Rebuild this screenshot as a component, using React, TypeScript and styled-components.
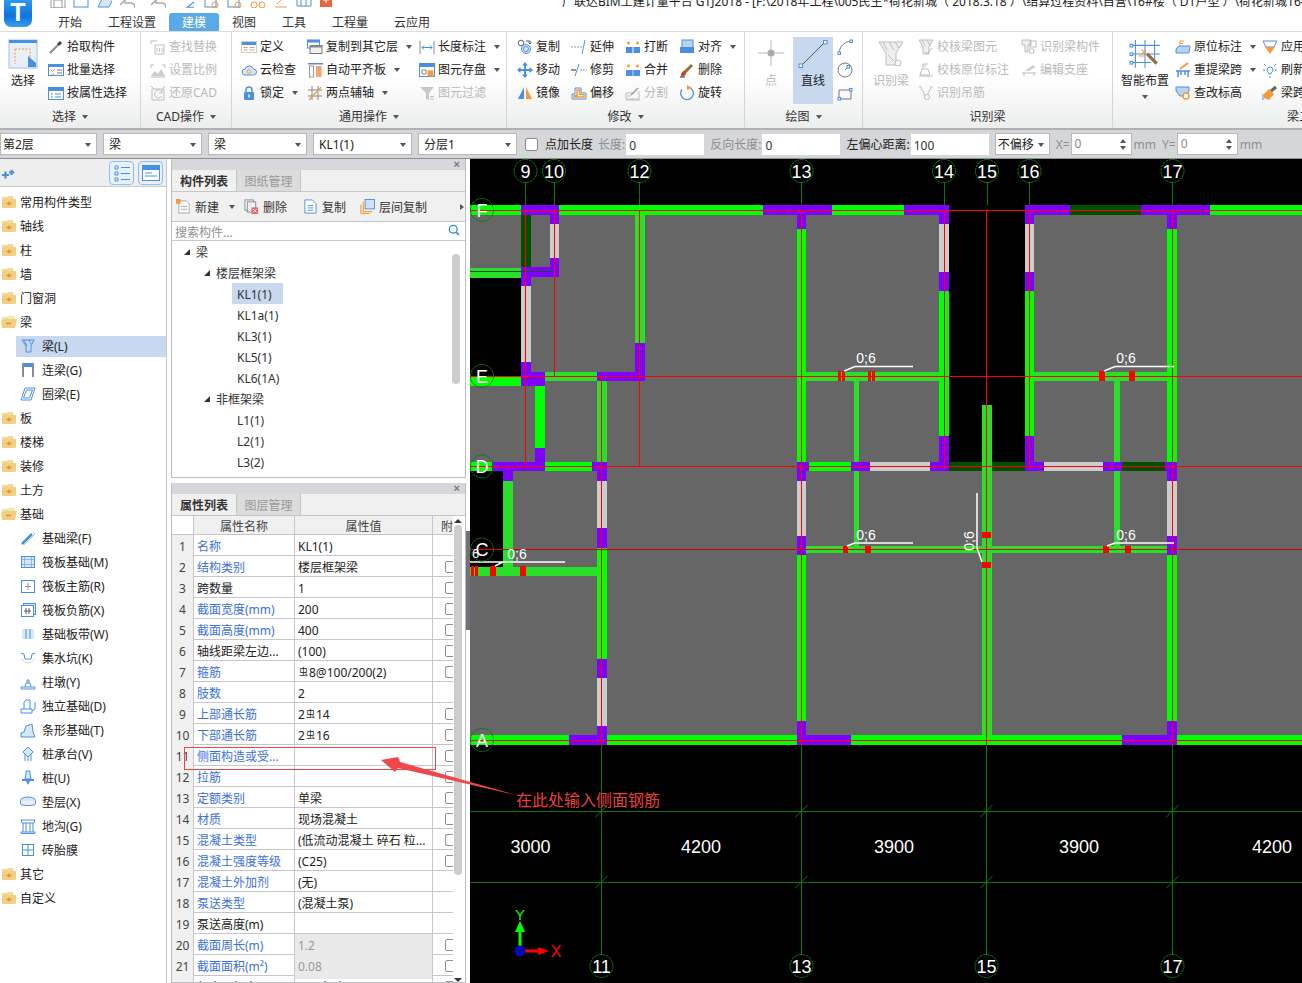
import React from 'react';
import styled, { createGlobalStyle } from 'styled-components';

const GlobalStyle = createGlobalStyle`
  html, body { margin: 0; padding: 0; background: #fff; overflow: hidden; }
  * { box-sizing: border-box; }
  #root { font: 12px/16px "Noto Sans", "Noto Sans CJK SC", sans-serif; color: #222; }
`;

const B = '#4a90e2', LB = '#d8e7f8', O = '#f59a3a', GR = '#bdbdbd';

const S = ({ c = B, f = 'none', w = 1, d, dash }: any) => <path d={d} stroke={c} fill={f} strokeWidth={w} strokeDasharray={dash} />;

const icons: Record<string, React.ReactNode> = {
  select: <><rect x="1" y="1" width="28" height="28" fill="#e8eff8" stroke="#9fc2ea" /><rect x="1" y="1" width="28" height="3" fill={B} /><path d="M7 10h15v15" fill="none" stroke={O} strokeDasharray="2 1.5" /><path d="M7 10v15" stroke={O} strokeDasharray="2 1.5" /><path d="M20 17l8 7v4h-8z" fill={B} /></>,
  picker: <><S c="#888" w={2} d="M2 14l8-8" /><S c="#444" w={3} d="M10 6l3-3" /></>,
  batch: <><rect x=".5" y="2.5" width="15" height="11" fill="#fff" stroke={B} /><rect x="1" y="3" width="14" height="2" fill={B} /><S c={O} d="M3 8l1.5 1.5L7 7M3 12l1.5 1 2-2" /><S c="#777" d="M9 8h5M9 11h5" /></>,
  propsel: <><rect x=".5" y="2.5" width="15" height="12" fill="#fff" stroke={B} /><rect x="1" y="3" width="14" height="3" fill={B} /><S c={B} d="M3 9h2M7 9h6M3 12h2M7 12h6" /></>,
  find: <><S c={GR} d="M1 2h6M1 2v3M5 6h9v9H5zM7 9v4M9.5 9v4M12 9v4" /></>,
  scale: <><S c={GR} d="M1 3h3M12 3h3M1 3v3M15 3v3" /><path d="M1 14l4-5 3 3 3-5 4 7z" fill="#ccc" /><S c={GR} d="M1 15h14" /></>,
  restore: <><S c={GR} d="M2 4h12v11H2zM1 1l3 3M15 1l-3 3M12 7a4 4 0 1 0 0 4M12 5v3H9" /></>,
  define: <><rect x=".5" y="2.5" width="15" height="11" fill="#fff" stroke="#ccc" /><rect x="1" y="3" width="14" height="3" fill={B} /><S c={O} d="M2.500 8.500h4M2.500 11h4" /><S c="#aaa" d="M8.500 8.500h5M8.500 11h5" /></>,
  cloud: <><path d="M4 13a3 3 0 0 1 0-6 4.500 4.500 0 0 1 8.500 0 3 3 0 0 1 0 6z" fill={LB} stroke={B} /><circle cx="8" cy="9.500" r="1.800" fill="none" stroke={O} /></>,
  lock: <><path d="M5 8V5a3 3 0 0 1 6 0v3" fill="none" stroke={B} strokeWidth="1.500" /><rect x="3" y="7" width="10" height="8" rx="1" fill={B} /><rect x="7.300" y="9.500" width="1.500" height="3" fill="#fff" /></>,
  copyfloor: <><rect x=".5" y="1" width="12" height="8" fill="#fff" stroke={B} /><rect x="1" y="1" width="11" height="2.500" fill={B} /><rect x="3" y="6.500" width="12" height="8" fill="#f0f0f0" stroke="#777" /><rect x="3" y="6.500" width="12" height="2" fill="#888" /></>,
  plate: <><rect x="1" y="1" width="15" height="1.500" fill={B} /><rect x="2.500" y="4" width="4" height="11" fill="#fff" stroke="#999" /><rect x="9" y="4" width="5.500" height="11" fill="#f9a36c" /></>,
  axis: <><S c="#888" d="M1 5h14M1 11h14M5 1v14M11 1v14" /><S c={O} w={1.200} d="M2 15L14 2" /></>,
  dim: <><S c="#889" d="M1 2v13M15 2v13" /><S c={B} d="M3 8.500h10M3 8.500l2-2M3 8.500l2 2M13 8.500l-2-2M13 8.500l-2 2" /></>,
  save: <><rect x=".5" y="1.500" width="15" height="13" fill="#fff" stroke={B} /><rect x="1" y="2" width="14" height="3" fill={B} /><S c="#888" d="M3 8h4v4H3z" /><rect x="8.500" y="8.500" width="6" height="6" fill={O} /></>,
  filter: <><path d="M1 2h14l-5 6v7l-3-1V8z" fill="#c8c8c8" /><S c={GR} d="M11 14h4M11 11.500h4" /></>,
  copy: <><circle cx="4" cy="4" r="2.800" fill="#fff" stroke="#666" /><circle cx="9" cy="10" r="4.500" fill={LB} stroke={B} /><circle cx="9" cy="10" r="2.500" fill="none" stroke={B} /><S c="#555" d="M9 2h4v3M11.500 3.500L13 5l1.500-1.500" /></>,
  move: <><path d="M8 0l3 3.500H9v3.500h3.500V5l3.500 3-3.500 3V9H9v3.500h2L8 16l-3-3.500h2V9H3.500v2L0 8l3.500-3v2H7V3.500H5z" fill={B} /></>,
  mirror: <><path d="M7 2v12H1z" fill={B} /><path d="M9 2v12h6z" fill={O} /></>,
  extend: <><S c="#7aa0d0" dash="2 1" d="M0 8h11" /><S c={B} d="M14 1l-3 14" /></>,
  trim: <><S c="#222" d="M0 8h5" /><S c="#7aa0d0" dash="2 1" d="M9 8h7" /><S c={B} d="M8 2l-4 12" /></>,
  offset: <><path d="M1 14V9h3V3h6v5h5v6z" fill="#fff" stroke={B} /><path d="M3 12V10.500h3V5h2.500v4.500H13V12z" fill="none" stroke={O} strokeWidth="1.500" /></>,
  breakI: <><rect x="1" y="8" width="6.500" height="6" fill={B} /><rect x="8.500" y="8" width="6.500" height="6" fill={B} /><S c={O} w={1.500} d="M2 4h3M3.500 2.500v3M11 4h3M12.500 2.500v3" /></>,
  merge: <><rect x="1" y="8" width="14" height="6" fill={B} /><S c="#bcd8f6" d="M8 8v6" /><S c={O} w={1.500} d="M2 4h3M3.500 2.500v3M11 4h3M12.500 2.500v3" /></>,
  split: <><S c={GR} d="M1 14h13V6M1 14V8h8" /><S c="#999" w={1.500} d="M6 10l7-7" /><S c={GR} d="M2 11h4M1 15h14" /></>,
  alignR: <><rect x="3" y="1" width="11" height="8" fill="#b8d4f4" stroke={B} /><rect x="1" y="8" width="14" height="6" fill={B} /></>,
  del: <><S c="#9a6a3a" w={3} d="M5 11l8-8" /><path d="M2 14c0-4 2-5 4-5l1 2c0 2-2 4-5 3z" fill="#c8401e" /><S c="#222" d="M1 15h5" /></>,
  rotate: <><path d="M8 2a6.300 6.300 0 1 1-5 2.500" fill="none" stroke={B} strokeWidth="1.300" /><path d="M8 0l5 3-5 2z" fill={O} /></>,
  point: <><S c="#bbb" d="M1 14h26M14 1v26" /><circle cx="14" cy="14" r="3.500" fill="#aaa" /></>,
  line: <><S c="#555" d="M3 27L27 3" /><rect x="1" y="25" width="3.500" height="3.500" fill="#fff" stroke={B} /><rect x="25.500" y="1.500" width="3.500" height="3.500" fill="#fff" stroke={B} /></>,
  arc: <><S c="#777" d="M2 14C3 6 8 3 14 2" /><rect x="1" y="13" width="2.500" height="2.500" fill="#fff" stroke={B} /><rect x="13" y="1" width="2.500" height="2.500" fill="#fff" stroke={B} /></>,
  circle: <><circle cx="8" cy="8" r="7" fill="none" stroke="#777" /><S c="#777" d="M8 8l3-3" /><rect x="10" y="3.500" width="2.500" height="2.500" fill="#fff" stroke={B} /></>,
  rectI: <><S c="#777" d="M2 5h12v9H2z" /><rect x="1" y="12.500" width="2.500" height="2.500" fill="#fff" stroke={B} /><rect x="12.500" y="3.500" width="2.500" height="2.500" fill="#fff" stroke={B} /></>,
  funnelBig: <><path d="M2 3h24l-7 11v12H9V14z" fill="#eee" stroke={GR} /><S c={GR} d="M6 3l4 8M12 3l5 8M18 3l4 6M11 16l6 6" /><circle cx="21" cy="24" r="3" fill="#fff" stroke={GR} /></>,
  chk1: <><path d="M1 1h14l-4 7v7H5V8z" fill="#eee" stroke={GR} /><S c={GR} d="M4 1l3 6M9 1l3 5M7 13l2 2 5-6" /></>,
  chk2: <><S c={GR} d="M2 13l2-6h6l2 6zM1 14h14M5 2v5M5 2h5M5 4h3" /></>,
  chk3: <><S c={GR} d="M1 2h3M12 2h3M3 3l3 5v3h4V8l3-5" /><circle cx="9" cy="12" r="2.500" fill="#fff" stroke={GR} /></>,
  chk4: <><path d="M1 1h9v5H7v7H4V6H1z" fill="#eee" stroke={GR} /><rect x="9" y="2" width="6" height="6" fill="none" stroke={GR} /><circle cx="10.500" cy="12" r="2.500" fill="#fff" stroke={GR} /></>,
  chk5: <><S c={GR} d="M1 11h14M3 14v-3M13 14v-3" /><path d="M4 9l8-6 2 2-6 4z" fill="#ccc" /></>,
  smart: <><S c={B} d="M6 1v26M15 1v26M24 1v22M1 6h28M1 14h28M1 22h20" /><S c="#9b6b3b" w={3} d="M17 14l9 9" /><S c={O} d="M12 10l4 4M16 10l-4 4M9 16h6" /><rect x="1" y="5" width="2.500" height="2.500" fill="#fff" stroke={B} /><rect x="1" y="13" width="2.500" height="2.500" fill="#fff" stroke={B} /><rect x="1" y="21" width="2.500" height="2.500" fill="#fff" stroke={B} /></>,
  raw: <><path d="M1 10l3-3h11l-1 7H1z" fill="#b8d4f4" stroke={B} /><S c={O} d="M5 2v5M5 2h4M5 4.500h3" /></>,
  span: <><S c={O} w={2} d="M5 7l8-6" /><S c={B} w={1.500} d="M1 9h14M3 9v6M13 9v6M6 9v4M10 9v4" /></>,
  elev: <><path d="M1 2h13v4l-3 5H5L1 6z" fill="#b8d4f4" stroke={B} /><circle cx="11" cy="11" r="3" fill="#fff" stroke={O} strokeWidth="1.500" /></>,
  apply: <><S c={B} d="M1 2h14l-3 6H4z" /><path d="M3 8h10l-5 7z" fill={O} /></>,
  refresh: <><S c={B} d="M5 8a3 3 0 1 1 6 0c0 2-2 2-2 4H7c0-2-2-2-2-4zM2 2l2 2M14 2l-2 2M1 8h2M13 8h2M7 15h2" /></>,
  brush: <><path d="M2 9l5-5 5 5-5 6-5-2z" fill={O} /><S c="#666" w={3} d="M9 6l5-4" /><S c={B} d="M1 15V9" /></>,
  sparkle: <><path d="M0 8h8M4 4v8" stroke={B} strokeWidth="2.500" /><path d="M8 5h6M11 2v6" stroke={B} strokeWidth="2.500" /></>,
  list: <><S c={B} d="M3 3h3v3H3zM3 9h3v3H3zM3 15h3v3H3zM9 4.500h9M9 10.500h9M9 16.500h9" /></>,
  form: <><rect x="1.500" y="2.500" width="17" height="15" fill="#fff" stroke={B} /><rect x="2" y="3" width="16" height="4" fill={B} /><S c={B} d="M4 10h7M4 13h12" /></>,
  folder: <><path d="M1 3h5l1-1h5v3H1z" fill="#f2d795" /><rect x="1" y="5" width="14" height="9" rx="1" fill="#f2cf80" /><S c="#d79a35" w={1.500} d="M5.500 9.500h5M8 7.500v4" /></>,
  folderOpen: <><path d="M1 3h5l1-1h7v3H1z" fill="#f6e3b2" /><path d="M3 5h13l-2 9H1L0 6z" fill="#f2cf80" /><S c="#c99a45" w={1.500} d="M5 9.500h5" /></>,
  beam: <><path d="M2 2h12l-3 6v6H6V8z" fill="none" stroke={B} /><S c={B} d="M4 2l3 6M9 2l2 4" /></>,
  link: <><rect x="2" y="1" width="12" height="4" fill={B} /><S c="#889" w={2} d="M3 1v14M13 1v14" /></>,
  ring: <><path d="M5 2h10l-4 12H1z" fill="#fff" stroke={B} /><path d="M6.500 4h6l-3 8h-6z" fill="none" stroke={B} /></>,
  fb: <><S c={B} w={2.500} d="M2 14L12 4" /><S c="#a9c9ee" w={1} d="M4 15l11-11L13 2" /></>,
  raft: <><rect x="1.500" y="2.500" width="13" height="11" fill={LB} stroke={B} /><path d="M1.500 5.500h13M1.500 10.500h13M4.500 2.500v11M11.500 2.500v11" stroke={B} fill="none" strokeDasharray="1 1" /></>,
  raft2: <><rect x="1.500" y="2.500" width="13" height="12" fill="#fff" stroke={B} /><S c="#999" d="M8 5v7M5 8.500h6" /></>,
  raft3: <><rect x="3.500" y="1.500" width="12" height="11" fill={LB} stroke={B} /><rect x="1.500" y="3.500" width="12" height="11" fill="#fff" stroke={B} /><S c="#556" d="M4 9h7M6 6v6M9 6v6" /></>,
  strip: <><rect x="2" y="3" width="12" height="10" fill={LB} /><S c={B} d="M6 3v10M10 3v10" /></>,
  pit: <><S c={B} d="M1 3l3 1 1 5h6l1-5 3-1" /><path d="M2 9c2 5 10 5 12 0" fill="none" stroke="#aaa" strokeDasharray="1 1" /></>,
  pier: <><S c={B} d="M1 13h14v2H1zM5 13l1-4h4l1 4M7 9V6h2v3" /></>,
  indep: <><path d="M1 11h11v4H1zM4 11V4l2-2h4v9M12 13l3-2V4" fill="#fff" stroke={B} /></>,
  strip2: <><path d="M1 15v-4l3-1 2-6 6-2 1 8 2 5z" fill={LB} stroke={B} /></>,
  cap: <><path d="M8 1l5 5-5 5-5-5z" fill={LB} stroke={B} /><S c={B} d="M5 8v7M8 11v4M11 8v7" /></>,
  pile: <><path d="M6 1h4v3l1 5H5l1-5z" fill={LB} stroke={B} /><path d="M2 9h12v2H2z" fill={B} /><path d="M6 11h4l-2 4z" fill={B} /></>,
  cushion: <><ellipse cx="8" cy="6.500" rx="7.500" ry="3.500" fill={LB} stroke={B} /><path d="M.5 7v3c0 2 15 2 15 0V7" fill="#eef" stroke={B} /></>,
  trench: <><S c={B} d="M1 2h14l-1 3H2zM3 5v9M6 5v9M10 5v9M13 5v9M1 14h14v1.500H1z" /></>,
  brick: <><rect x="2.500" y="2.500" width="11" height="11" fill="#fff" stroke={B} /><S c={B} d="M8 2.500v11M2.500 8h11" /></>,
  newI: <><path d="M3 2h8l3 3v10H3z" fill="#fff" stroke="#aaa" /><rect x="0" y="0" width="5" height="5" fill={O} /><S c="#aaa" d="M5 8h7M5 11h7" /></>,
  delI: <><rect x="1" y="1" width="9" height="11" fill="#fff" stroke="#889" /><rect x="3.500" y="3" width="9" height="11" fill="#eee" stroke="#889" /><rect x="8" y="9" width="7" height="7" fill="#e0606a" /><S c="#fff" d="M9.500 10.500l4 4M13.500 10.500l-4 4" /></>,
  copyI: <><path d="M2 1h8l4 4v10H2z" fill="#fff" stroke={B} /><S c={B} d="M5 7h6M5 9.500h6M5 12h6" /></>,
  floorI: <><rect x="5.500" y=".5" width="10" height="10" fill="#cfe2f7" stroke={B} /><S c={O} w={1.200} d="M3.500 3v10.500H13M1 6v9.500h9" /></>,
  search: <><circle cx="6" cy="6" r="4.500" fill="none" stroke="#2d8fc4" strokeWidth="1.500" /><path d="M9.500 9.500l3 3" stroke="#2d8fc4" strokeWidth="2" /></>,
  q1: <><S c="#999" d="M1 1h14v15H1zM4 8h8v8H4z" /></>,
  q2: <><rect x="1" y="1" width="14" height="14" fill="#fff" stroke={B} /><rect x="1" y="6" width="14" height="2" fill={B} /></>,
  q3: <><path d="M2 15l4-8h11l-4 8z" fill={LB} stroke={B} /></>,
  q4: <><S c="#aaa" w={1.500} d="M1 13l5-5v3h6c3 0 4 2 4 5" /></>,
  sigma: <><S c={B} w={1.500} d="M2 2h10M12 8L3 15h9" /></>,
  q5: <><rect x="1" y="1" width="11" height="14" fill="#fff" stroke={B} /><circle cx="11" cy="13" r="3" fill="none" stroke={O} /></>,
  q6: <><circle cx="4" cy="13" r="3" fill="none" stroke={O} /><circle cx="12" cy="13" r="3" fill="none" stroke={O} /></>,
  q7: <><S c={O} d="M2 15h12M4 12l6-6" /></>,
  q8: <><S c={B} d="M1 14h14v-6L8 2 1 8zM5 14V6M10 14V6" /></>,
  q9: <><rect x="1" y="2" width="12" height="13" fill="#e8663c" /><S c="#fff" d="M4 8h6M7 5v6" /><S c={B} d="M9 2h6v6" /></>,
};

const IconSvg = styled.svg<{ $s: number }>`
  width: ${(p) => p.$s}px;
  height: ${(p) => p.$s}px;
  flex: none;
  display: block;
`;
const Icon = ({ n, s = 16, v = 16 }: { n: string; s?: number; v?: number }) => (
  <IconSvg $s={s} viewBox={`0 0 ${v} ${v}`}>{icons[n]}</IconSvg>
);

const Page = styled.div`
  position: relative;
  width: 1302px;
  height: 983px;
  overflow: hidden;
  background: #fff;
`;
const TopBar = styled.header`
  display: flex;
  height: 32px;
  background: #fff;
  border-bottom: 1px solid #dcdcdc;
`;
const LogoCell = styled.div`
  width: 36px;
  padding-left: 4px;
  flex: none;
`;
const Logo = styled.div`
  width: 28px;
  height: 27px;
  border-radius: 0 0 7px 7px;
  background: linear-gradient(#2a9af0, #0f73de 60%, #3aa0ee);
  color: #fff;
  font: bold 25px/25px "Liberation Sans", sans-serif;
  text-align: center;
`;
const TopColumn = styled.div`
  flex: 1;
  min-width: 0;
  display: flex;
  flex-direction: column;
`;
const QuickRow = styled.div`
  height: 13px;
  display: flex;
  align-items: flex-end;
  overflow: hidden;
  padding-bottom: 5px;
`;
const QuickIcons = styled.div`
  width: 526px;
  flex: none;
  display: flex;
  align-items: flex-end;
  gap: 7px;
  padding-left: 14px;
`;
const QuickCaret = styled.span`
  width: 0;
  height: 0;
  flex: none;
  margin: 0 0 8px -5px;
  border: 3.5px solid transparent;
  border-top: 4px solid #888;
  border-bottom: 0;
`;
const SigmaCell = styled.span`
  flex: none;
  margin-left: 4px;
  width: 12px;
`;
const Title = styled.div`
  white-space: nowrap;
  line-height: 14px;
  color: #222;
  margin-bottom: -1px;
`;
const Tabs = styled.nav`
  height: 18px;
  display: flex;
  padding-left: 22px;
`;
const Tab = styled.div<{ $w: number; $on?: boolean; $ml?: number }>`
  width: ${(p) => p.$w}px;
  margin-left: ${(p) => p.$ml ?? 0}px;
  text-align: center;
  line-height: 19px;
  border-radius: 3px 3px 0 0;
  color: ${(p) => (p.$on ? '#fff' : '#333')};
  background: ${(p) => (p.$on ? '#5aa9e8' : 'transparent')};
`;

const Ribbon = styled.section`
  height: 98px;
  display: flex;
  background: linear-gradient(#fff 45%, #eceded);
  overflow: hidden;
  border-bottom: 2px solid #b0b1b4;
`;
const Group = styled.div<{ $w: number; $last?: boolean }>`
  width: ${(p) => p.$w}px;
  flex: none;
  display: flex;
  flex-direction: column;
  padding-top: 3px;
  border-right: ${(p) => (p.$last ? '0' : '1px solid #d4d5d6')};
`;
const GroupBody = styled.div<{ $pad?: number }>`
  height: 70px;
  display: flex;
  padding-left: ${(p) => p.$pad ?? 0}px;
`;
const GroupLabel = styled.div<{ $left?: number }>`
  height: 23px;
  display: flex;
  align-items: center;
  justify-content: ${(p) => (p.$left ? 'flex-start' : 'center')};
  padding-left: ${(p) => p.$left ?? 0}px;
  gap: 6px;
  color: #333;
  white-space: nowrap;
`;
const Caret = styled.span`
  width: 0;
  height: 0;
  flex: none;
  border: 3.5px solid transparent;
  border-top: 4px solid #555;
  border-bottom: 0;
`;
const ToolColumn = styled.div<{ $w: number; $ml?: number }>`
  width: ${(p) => p.$w}px;
  margin-left: ${(p) => p.$ml ?? 0}px;
  flex: none;
`;
const ToolItem = styled.div`
  height: 23px;
  display: flex;
  align-items: center;
  gap: 3px;
  white-space: nowrap;
`;
const ToolText = styled.span<{ $off?: boolean }>`
  color: ${(p) => (p.$off ? '#b9b9b9' : '#222')};
  margin-right: 5px;
`;
const BigTool = styled.div<{ $w: number; $on?: boolean; $off?: boolean; $ml?: number }>`
  width: ${(p) => p.$w}px;
  height: 67px;
  margin: 2px 0 0 ${(p) => p.$ml ?? 0}px;
  padding-top: 2px;
  flex: none;
  display: flex;
  flex-direction: column;
  align-items: center;
  white-space: nowrap;
  color: ${(p) => (p.$off ? '#b9b9b9' : '#222')};
  background: ${(p) => (p.$on ? '#c7d8ef' : 'transparent')};
`;
const BigIcon = styled.div`
  height: 34px;
`;
const BigCaret = styled(Caret)`
  margin-top: 6px;
`;

const PropBar = styled.section`
  height: 28px;
  display: flex;
  align-items: center;
  gap: 6px;
  background: #d5d6d9;
  white-space: nowrap;
`;
const SelectBox = styled.div<{ $w: number }>`
  width: ${(p) => p.$w}px;
  height: 22px;
  flex: none;
  background: #fff;
  border: 1px solid #b8b8b8;
  padding: 2px 5px 0 2px;
  display: flex;
  align-items: center;
  justify-content: space-between;
  line-height: 18px;
`;
const CheckBox = styled.span`
  width: 13px;
  height: 13px;
  flex: none;
  margin: 0 2px;
  background: #fff;
  border: 1px solid #8a8a8a;
  border-radius: 2px;
`;
const BarLabel = styled.span<{ $off?: boolean; $ml?: number }>`
  color: ${(p) => (p.$off ? '#8f8f8f' : '#222')};
  margin-left: ${(p) => p.$ml ?? 0}px;
  padding-top: 2px;
`;
const TextField = styled.div<{ $w: number }>`
  width: ${(p) => p.$w}px;
  height: 21px;
  flex: none;
  background: #fff;
  padding-left: 3px;
  line-height: 23px;
  color: #333;
  margin-left: -5px;
`;
const Spin = styled.div`
  width: 61px;
  height: 22px;
  flex: none;
  margin: 0 -4px 0 -5px;
  background: #fff;
  border: 1px solid #b8b8b8;
  padding: 0 5px 0 3px;
  color: #888;
  line-height: 22px;
  display: flex;
  justify-content: space-between;
  align-items: center;
`;
const SpinArrows = styled.span`
  display: flex;
  flex-direction: column;
  gap: 3px;
`;
const Up = styled.i`
  display: block;
  border: 3px solid transparent;
  border-bottom: 4px solid #555;
  border-top: 0;
`;
const Down = styled.i`
  display: block;
  border: 3px solid transparent;
  border-top: 4px solid #555;
  border-bottom: 0;
`;

const Main = styled.main`
  height: 825px;
  display: flex;
  border-top: 1px solid #8e9094;
`;
const Sidebar = styled.aside`
  width: 167px;
  flex: none;
  border-right: 1px solid #c5c5cd;
`;
const SideBar = styled.div`
  height: 28px;
  background: #eeeeee;
  border-bottom: 1px solid #c8c8c8;
  display: flex;
  align-items: center;
  padding: 0 3px 0 2px;
  gap: 4px;
`;
const SparkleCell = styled.div`
  flex: 1;
  padding-top: 4px;
`;
const SideBtn = styled.div`
  width: 25px;
  height: 24px;
  border: 1px solid #8fbdee;
  border-radius: 4px;
  background: #e6f1fc;
  display: flex;
  align-items: center;
  justify-content: center;
`;
const SideList = styled.ul`
  list-style: none;
  margin: 0;
  padding: 3px 0 0;
`;
const SideRow = styled.li<{ $sub?: boolean; $on?: boolean }>`
  height: 24px;
  display: flex;
  align-items: center;
  gap: ${(p) => (p.$sub ? 6 : 3)}px;
  margin-left: ${(p) => (p.$sub ? 16 : 0)}px;
  padding-left: ${(p) => (p.$sub ? 4 : 1)}px;
  white-space: nowrap;
  background: ${(p) => (p.$on ? 'linear-gradient(#fff 2px, #c7d8ef 2px, #c7d8ef 23px, #fff 23px)' : 'none')};
`;
const SideText = styled.span`
  padding-top: 2px;
`;

const PanelColumn = styled.div`
  width: 299px;
  flex: none;
  padding: 0 0 0 4px;
  display: flex;
  flex-direction: column;
  gap: 5px;
  min-height: 0;
`;
const Panel = styled.section<{ $h?: number }>`
  width: 295px;
  height: ${(p) => (p.$h ? `${p.$h}px` : 'auto')};
  flex: ${(p) => (p.$h ? 'none' : '1')};
  min-height: 0;
  overflow: hidden;
  display: flex;
  flex-direction: column;
  border: 1px solid #bdbec2;
  border-top: 0;
`;
const PanelStrip = styled.div`
  height: 11px;
  flex: none;
  background: #d5d7dc;
  color: #777;
  font: bold 11px/10px "Liberation Sans", sans-serif;
  text-align: right;
  padding-right: 5px;
`;
const PanelTabs = styled.div`
  height: 22px;
  flex: none;
  display: flex;
  background: #f0f0f0;
  border-bottom: 1px solid #c6c6c6;
`;
const PanelTab = styled.div<{ $on?: boolean }>`
  width: ${(p) => (p.$on ? 65 : 64)}px;
  text-align: center;
  line-height: 23px;
  font-weight: ${(p) => (p.$on ? 600 : 400)};
  color: ${(p) => (p.$on ? '#333' : '#999')};
  background: ${(p) => (p.$on ? '#f0f0f0' : '#dcdcdc')};
  border-right: 1px solid #c6c6c6;
`;
const PanelTools = styled.div`
  height: 30px;
  flex: none;
  display: flex;
  align-items: center;
  padding-left: 4px;
  background: #f0f0f0;
  border-bottom: 1px solid #c6c6c6;
`;
const PanelTool = styled.div<{ $w: number }>`
  width: ${(p) => p.$w}px;
  flex: none;
  display: flex;
  align-items: center;
  gap: 4px;
  color: #333;
  white-space: nowrap;
`;
const PanelText = styled.span`
  padding-top: 2px;
  margin-right: 6px;
`;
const MoreMark = styled.span`
  display: flex;
  gap: 1px;
  margin-left: 16px;
`;
const MoreArrow = styled.i`
  width: 0;
  height: 0;
  border-style: solid;
  border-width: 3px 0 3px 4px;
  border-color: transparent transparent transparent #555;
`;
const SearchBox = styled.div`
  height: 19px;
  flex: none;
  display: flex;
  align-items: center;
  justify-content: space-between;
  padding: 0 3px;
  color: #8f8f8f;
  border-bottom: 1px solid #c6c6c6;
`;
const SearchText = styled.span`
  padding-top: 4px;
`;
const TreeArea = styled.div`
  flex: 1;
  display: flex;
  min-height: 0;
`;
const Tree = styled.ul`
  flex: 1;
  list-style: none;
  margin: 0;
  padding: 0;
`;
const TreeRow = styled.li<{ $lv: number }>`
  height: 21px;
  display: flex;
  align-items: center;
  gap: 6px;
  padding-left: ${(p) => [12, 32, 60][p.$lv]}px;
  color: #333;
`;
const TreeArrow = styled.span`
  width: 0;
  height: 0;
  border-style: solid;
  border-width: 0 0 6px 6px;
  border-color: transparent transparent #333 transparent;
`;
const TreeLabel = styled.span<{ $on?: boolean }>`
  width: ${(p) => (p.$on ? '51px' : 'auto')};
  height: 21px;
  line-height: 23px;
  padding-left: ${(p) => (p.$on ? 5 : 0)}px;
  margin-left: ${(p) => (p.$on ? 0 : 5)}px;
  background: ${(p) => (p.$on ? '#c7d8ef' : 'none')};
`;
const PlainLabel = styled.span`
  padding-top: 2px;
`;
const TreeRail = styled.div`
  width: 13px;
  flex: none;
  padding-top: 13px;
`;
const TreeThumb = styled.div`
  width: 8px;
  height: 130px;
  border-radius: 4px;
  background: #cccccc;
`;

const TableArea = styled.div`
  flex: 1;
  display: flex;
  min-height: 0;
  overflow: hidden;
`;
const Table = styled.div`
  width: 281px;
  flex: none;
`;
const TableHead = styled.div`
  height: 19px;
  display: grid;
  grid-template-columns: 22px 101px 138px 20px;
  text-align: center;
  line-height: 21px;
  color: #444;
  border-bottom: 1px solid #c6c6cc;
`;
const HeadCell = styled.div<{ $blank?: boolean }>`
  background: ${(p) => (p.$blank ? '#fff' : '#f0f0f0')};
  border-right: 1px solid #c6c6cc;
  overflow: hidden;
  white-space: nowrap;
`;
const HeadClip = styled.div`
  background: #f0f0f0;
  overflow: hidden;
  white-space: nowrap;
  text-align: left;
  padding-left: 8px;
`;
const TableRow = styled.div`
  height: 21px;
  display: grid;
  grid-template-columns: 22px 101px 138px 20px;
  border-bottom: 1px solid #c6c6cc;
  line-height: 24px;
  white-space: nowrap;
`;
const IndexCell = styled.div`
  background: #f0f0f0;
  border-right: 1px solid #c6c6cc;
  text-align: center;
  color: #444;
`;
const NameCell = styled.div<{ $blue?: boolean }>`
  padding-left: 3px;
  border-right: 1px solid #c6c6cc;
  color: ${(p) => (p.$blue ? '#3b6fe0' : '#222')};
  overflow: hidden;
`;
const ValueCell = styled.div<{ $off?: boolean }>`
  padding-left: 3px;
  border-right: 1px solid #c6c6cc;
  overflow: hidden;
  color: ${(p) => (p.$off ? '#999' : '#222')};
  background: ${(p) => (p.$off ? '#e9e9e9' : 'transparent')};
`;
const AttachCell = styled.div`
  padding: 5px 0 0 12px;
  overflow: hidden;
`;
const AttachBox = styled.span`
  display: block;
  width: 14px;
  height: 12px;
  border: 1px solid #8f8f8f;
  border-radius: 2px;
`;
const TableRail = styled.div`
  width: 12px;
  flex: none;
  display: flex;
  flex-direction: column;
  align-items: flex-start;
  padding-top: 3px;
  padding-left: 1px;
`;
const RailUp = styled.i`
  border: 4px solid transparent;
  border-bottom: 4px solid #333;
  border-top: 0;
  margin-bottom: 2px;
`;
const RailDown = styled.i`
  border: 4px solid transparent;
  border-top: 4px solid #333;
  border-bottom: 0;
  margin-top: 103px;
`;
const TableThumb = styled.div`
  width: 8px;
  height: 350px;
  flex: none;
  border-radius: 4px;
  background: #cccccc;
`;
const SplitGrip = styled.div`
  width: 4px;
  flex: none;
  padding-top: 372px;
`;
const Grip = styled.div`
  height: 99px;
  background: #70727a;
`;
const Canvas = styled.div`
  flex: 1;
  background: #000;
  min-width: 0;
`;
const CanvasSvg = styled.svg`
  display: block;
  width: 832px;
  height: 824px;
`;
const Overlay = styled.svg`
  position: absolute;
  left: 0;
  top: 0;
  width: 1302px;
  height: 983px;
  pointer-events: none;
`;

const G = '#00ff00', L = '#2adf2a', P = '#8000ff', W = '#cccccc', D = '#005000', R = '#ff0000';
const beams: [number, number, number, number, string][] = [
  [470,205,51,10,G],[521,205,38,10,P],[559,205,204,10,G],[763,205,69,10,P],[832,205,72,10,G],[904,205,45,10,P],[1025,205,45,10,P],[1070,205,71,10,D],[1141,205,69,10,P],[1210,205,92,10,G],
  [521,215,10,52,D],[470,268,51,10,L],[521,267,38,10,P],[550,215,9,9,P],[550,224,9,34,W],[550,258,9,10,P],[521,277,10,9,P],[521,286,10,76,W],[521,362,10,24,P],[521,372,24,14,P],[470,377,51,9,G],[545,372,52,9,L],[597,372,48,9,P],[635,215,10,128,L],[635,343,10,38,P],
  [806,546,361,7,L],[806,372,133,9,L],[854,381,5,81,L],[854,471,5,75,L],
  [797,215,9,14,P],[797,229,9,233,G],[797,481,9,55,W],[797,536,9,19,P],[797,555,9,166,G],[797,721,9,24,P],
  [939,215,10,9,P],[939,224,10,48,W],[939,272,10,19,P],[939,291,10,145,G],[939,436,10,35,P],
  [1025,215,9,9,P],[1025,224,9,48,W],[1025,272,9,19,P],[1025,291,9,145,G],[1025,436,9,35,P],
  [1034,372,133,9,L],[1114,381,6,81,L],[1114,471,6,75,L],
  [1167,215,10,14,P],[1167,229,10,233,G],[1167,462,10,19,P],[1167,481,10,55,W],[1167,536,10,19,P],[1167,555,10,166,G],[1167,721,10,24,P],
  [470,462,22,9,G],[492,462,53,9,P],[535,386,10,62,G],[535,448,10,14,P],[545,462,47,9,G],[592,462,15,9,P],[503,471,10,10,P],[503,481,10,86,L],[470,567,127,9,L],
  [597,381,10,81,L],[597,471,10,10,P],[597,481,10,47,W],[597,528,10,20,P],[597,548,10,111,G],[597,659,10,19,P],[597,678,10,48,W],[597,726,10,9,P],
  [797,462,12,9,P],[797,471,9,10,P],[809,462,42,9,G],[851,462,19,9,P],[870,462,60,9,W],[930,462,19,9,P],[949,462,76,9,D],[1025,462,19,9,P],[1044,462,59,9,W],[1103,462,19,9,P],[1122,462,43,9,D],[1165,462,12,9,P],
  [982,405,10,330,L],
  [470,735,99,10,G],[569,735,38,10,P],[607,735,190,10,G],[797,735,54,10,P],[851,735,271,10,G],[1122,735,55,10,P],[1177,735,125,10,G],
  [838,371,3,10,R],[842,371,3,10,R],[868,371,3,10,R],[872,371,3,10,R],[1099,371,6,10,R],[1129,371,6,10,R],
  [471,566,3,10,R],[475,566,3,10,R],[490,566,6,10,R],[520,566,6,10,R],
  [843,546,5,7,R],[865,546,6,7,R],[1103,546,6,7,R],[1125,546,6,7,R],
  [982,532,9,6,R],[982,562,9,6,R],
];
const redV: [number, number, number][] = [[525.5,210,466],[554.5,210,376],[639.5,210,466],[601.5,376,745],[801.5,210,745],[944.5,210,466],[986.5,210,745],[1029.5,210,466],[1172.5,210,745]];
const redH = [210.5, 376.5, 466.5, 549.5, 740.5];
const topAxis: [number, string][] = [[525.5,'9'],[554,'10'],[639.5,'12'],[801.5,'13'],[944,'14'],[987,'15'],[1029.5,'16'],[1172.5,'17']];
const leftAxis: [number, string][] = [[210,'F'],[376,'E'],[466.5,'D'],[549.5,'C'],[740,'A']];
const botAxis: [number, string][] = [[601.5,'11'],[801.5,'13'],[986.5,'15'],[1172.5,'17']];
const dims: [number, string][] = [[530.5,'3000'],[701,'4200'],[894,'3900'],[1079,'3900'],[1272,'4200']];
const leaders = [
  { d: 'M844 371L855 366.500H913', x: 866, y: 363 },
  { d: 'M1104 371L1115 366.500H1174', x: 1126, y: 363 },
  { d: 'M847 546L855 543H913', x: 866, y: 540 },
  { d: 'M1107 546L1115 543H1174', x: 1126, y: 540 },
  { d: 'M470 562H565M495 566L503 562', x: 517, y: 559 },
];

const Drawing = () => (
  <CanvasSvg viewBox="470 159 832 824" fontFamily='"Liberation Sans", sans-serif'>
    <g shapeRendering="crispEdges">
      <rect x="470" y="205" width="832" height="540" fill="#666666" />
      <rect x="470" y="278" width="51" height="99" fill="#000" />
      <rect x="470" y="471" width="33" height="96" fill="#000" />
      <rect x="949" y="205" width="76" height="257" fill="#000" />
      {beams.map((b, i) => <rect key={i} x={b[0]} y={b[1]} width={b[2]} height={b[3]} fill={b[4]} />)}
      <path d="M470 271.500H553" stroke="#0a5a14" />
      <g stroke="#0a7a0a">
        {topAxis.map(([x]) => <path key={x} d={`M${Math.floor(x) + 0.5} 182V205`} />)}
        {botAxis.map(([x]) => <path key={x} d={`M${x} 745V955`} />)}
        <path d="M470 811.500H1302M470 882.500H1302" />
      </g>
      {redH.map((y) => <rect key={y} x="470" y={y - 0.5} width="832" height="1" fill={y === 549.5 ? '#d40000' : R} />)}
      {redV.map(([x, a, b]) => <rect key={x} x={x - 0.5} y={a} width="1" height={b - a} fill={R} />)}
    </g>
    <g stroke="#0a7a0a" strokeWidth="1">
      {botAxis.map(([x]) => <path key={x} d={`M${x - 6} 817L${x + 6} 805M${x - 6} 888L${x + 6} 876`} />)}
    </g>
    <g stroke="#fff" strokeWidth="1.500" fill="none">
      {leaders.map((l) => <path key={l.d} d={l.d} />)}
      <path d="M977 493V548L982 562" />
    </g>
    <g fill="#fff" fontSize="14" textAnchor="middle">
      {leaders.map((l) => <text key={l.d} x={l.x} y={l.y}>0;6</text>)}
      <text x="974" y="541" transform="rotate(-90 974 541)">0;6</text>
    </g>
    <g fill="none" stroke="#0a7a0a" strokeDasharray="3 0.600">
      {topAxis.map(([x]) => <circle key={x} cx={x} cy="171" r="11.500" />)}
      {leftAxis.map(([y, t]) => <circle key={t} cx="482" cy={y} r="11.500" />)}
      {botAxis.map(([x]) => <circle key={x} cx={x} cy="966" r="11.500" />)}
    </g>
    <g fill="#fff" fontSize="18" textAnchor="middle">
      {topAxis.map(([x, t]) => <text key={x} x={x} y="177.500">{t}</text>)}
      {leftAxis.map(([y, t]) => <text key={t} x="482" y={y + 6.5}>{t}</text>)}
      {botAxis.map(([x, t]) => <text key={x} x={x} y="972.500">{t}</text>)}
      {dims.map(([x, t]) => <text key={x} x={x} y="853">{t}</text>)}
      <text x="475.500" y="558" fontSize="13">6</text>
    </g>
    <path d="M520 948V930" stroke="#00ff00" strokeWidth="3" />
    <path d="M520 921l5 11h-10z" fill="#00ff00" />
    <path d="M520 951H540" stroke="#ff0000" strokeWidth="3" />
    <path d="M549 951l-11-4v8z" fill="#ff0000" />
    <circle cx="520" cy="951" r="5.500" fill="#0a0ab4" />
    <text x="520" y="920" fill="#00ff00" fontSize="15" textAnchor="middle">Y</text>
    <text x="556" y="957" fill="#ff0000" fontSize="16" textAnchor="middle">X</text>
  </CanvasSvg>
);

type ToolT = [string, string, boolean?, boolean?];
const Tool = ({ t }: { t: ToolT }) => (
  <ToolItem>
    <Icon n={t[0]} />
    <ToolText $off={t[3]}>{t[1]}</ToolText>
    {t[2] ? <Caret /> : null}
  </ToolItem>
);
const Col = ({ w, ml, items }: { w: number; ml?: number; items: ToolT[] }) => (
  <ToolColumn $w={w} $ml={ml}>{items.map((t) => <Tool key={t[1]} t={t} />)}</ToolColumn>
);
const SmallCol = ({ ml, items }: { ml: number; items: string[] }) => (
  <ToolColumn $w={16} $ml={ml}>{items.map((n) => <ToolItem key={n}><Icon n={n} /></ToolItem>)}</ToolColumn>
);

const sideRows: [string, string, boolean?, boolean?][] = [
  ['folder','常用构件类型'],['folder','轴线'],['folder','柱'],['folder','墙'],['folder','门窗洞'],['folderOpen','梁'],
  ['beam','梁(L)',true,true],['link','连梁(G)',true],['ring','圈梁(E)',true],
  ['folder','板'],['folder','楼梯'],['folder','装修'],['folder','土方'],['folderOpen','基础'],
  ['fb','基础梁(F)',true],['raft','筏板基础(M)',true],['raft2','筏板主筋(R)',true],['raft3','筏板负筋(X)',true],['strip','基础板带(W)',true],['pit','集水坑(K)',true],['pier','柱墩(Y)',true],['indep','独立基础(D)',true],['strip2','条形基础(T)',true],['cap','桩承台(V)',true],['pile','桩(U)',true],['cushion','垫层(X)',true],['trench','地沟(G)',true],['brick','砖胎膜',true],
  ['folder','其它'],['folder','自定义'],
];

const propRows: [string, string, boolean, number][] = [
  ['名称','KL1(1)',true,0],['结构类别','楼层框架梁',true,1],['跨数量','1',false,1],['截面宽度(mm)','200',true,1],['截面高度(mm)','400',true,1],['轴线距梁左边...','(100)',false,1],['箍筋','8@100/200(2)',true,1],['肢数','2',true,0],['上部通长筋','2-14',true,1],['下部通长筋','2-16',true,1],
  ['侧面构造或受...','',true,1],['拉筋','',true,1],['定额类别','单梁',true,1],['材质','现场混凝土',true,1],['混凝土类型','(低流动混凝土 碎石 粒...',true,1],['混凝土强度等级','(C25)',true,1],['混凝土外加剂','(无)',true,0],['泵送类型','(混凝土泵)',true,0],['泵送高度(m)','',false,0],['截面周长(m)','1.2',true,1],['截面面积(m²)','0.08',true,1],['起点顶标高(m)','层顶标高',false,1],
];

const Rebar = styled.span`
  font-size: 9px;
  color: #222;
  display: inline-block;
  width: 10px;
  margin-left: 1px;
  line-height: 10px;
  vertical-align: 2px;
`;
const valueNode = (v: string) => {
  if (v.includes('8@')) return <><Rebar>虫</Rebar>{v}</>;
  if (v === '2-14') return <>2<Rebar>虫</Rebar>14</>;
  if (v === '2-16') return <>2<Rebar>虫</Rebar>16</>;
  return v;
};

export default function App() {
  return (
    <Page>
      <GlobalStyle />
      <TopBar>
        <LogoCell><Logo>T</Logo></LogoCell>
        <TopColumn>
          <QuickRow>
            <QuickIcons>
              <Icon n="q1" /><Icon n="q2" /><Icon n="q3" /><Icon n="q4" /><QuickCaret /><Icon n="q4" /><QuickCaret />
              <SigmaCell><Icon n="sigma" s={12} /></SigmaCell>
              <Icon n="q5" /><Icon n="q5" /><Icon n="q6" /><Icon n="q7" /><Icon n="q8" /><Icon n="q9" /><QuickCaret />
            </QuickIcons>
            <Title>广联达BIM土建计量平台 GTJ2018 - [F:\2018年工程\005民生*荷花新城（ 2018.3.18 ）\结算过程资料\自营\16#楼（ D1户型 ）\荷花新城16#</Title>
          </QuickRow>
          <Tabs>
            <Tab $w={24}>开始</Tab>
            <Tab $w={48} $ml={26}>工程设置</Tab>
            <Tab $w={50} $ml={13} $on>建模</Tab>
            <Tab $w={24} $ml={13}>视图</Tab>
            <Tab $w={24} $ml={26}>工具</Tab>
            <Tab $w={36} $ml={26}>工程量</Tab>
            <Tab $w={36} $ml={26}>云应用</Tab>
          </Tabs>
        </TopColumn>
      </TopBar>
      <Ribbon>
        <Group $w={141}>
          <GroupBody>
            <BigTool $w={46}><BigIcon><Icon n="select" s={30} v={30} /></BigIcon>选择</BigTool>
            <Col w={92} ml={2} items={[['picker','拾取构件'],['batch','批量选择'],['propsel','按属性选择']]} />
          </GroupBody>
          <GroupLabel>选择<Caret /></GroupLabel>
        </Group>
        <Group $w={91}>
          <GroupBody $pad={9}>
            <Col w={80} items={[['find','查找替换',false,true],['scale','设置比例',false,true],['restore','还原CAD',false,true]]} />
          </GroupBody>
          <GroupLabel>CAD操作<Caret /></GroupLabel>
        </Group>
        <Group $w={275}>
          <GroupBody $pad={9}>
            <Col w={66} items={[['define','定义'],['cloud','云检查'],['lock','锁定',true]]} />
            <Col w={112} items={[['copyfloor','复制到其它层',true],['plate','自动平齐板',true],['axis','两点辅轴',true]]} />
            <Col w={85} items={[['dim','长度标注',true],['save','图元存盘',true],['filter','图元过滤',false,true]]} />
          </GroupBody>
          <GroupLabel>通用操作<Caret /></GroupLabel>
        </Group>
        <Group $w={238}>
          <GroupBody $pad={10}>
            <Col w={54} items={[['copy','复制'],['move','移动'],['mirror','镜像']]} />
            <Col w={54} items={[['extend','延伸'],['trim','修剪'],['offset','偏移']]} />
            <Col w={54} items={[['breakI','打断'],['merge','合并'],['split','分割',false,true]]} />
            <Col w={60} items={[['alignR','对齐',true],['del','删除'],['rotate','旋转']]} />
          </GroupBody>
          <GroupLabel>修改<Caret /></GroupLabel>
        </Group>
        <Group $w={118}>
          <GroupBody $pad={6}>
            <BigTool $w={40} $off><BigIcon><Icon n="point" s={28} v={28} /></BigIcon>点</BigTool>
            <BigTool $w={40} $ml={2} $on><BigIcon><Icon n="line" s={30} v={30} /></BigIcon>直线</BigTool>
            <SmallCol ml={4} items={['arc','circle','rectI']} />
          </GroupBody>
          <GroupLabel>绘图<Caret /></GroupLabel>
        </Group>
        <Group $w={250}>
          <GroupBody $pad={8}>
            <BigTool $w={40} $off><BigIcon><Icon n="funnelBig" s={28} v={28} /></BigIcon>识别梁</BigTool>
            <Col w={103} ml={7} items={[['chk1','校核梁图元',false,true],['chk2','校核原位标注',false,true],['chk3','识别吊筋',false,true]]} />
            <Col w={90} items={[['chk4','识别梁构件',false,true],['chk5','编辑支座',false,true]]} />
          </GroupBody>
          <GroupLabel>识别梁</GroupLabel>
        </Group>
        <Group $w={189} $last>
          <GroupBody $pad={7}>
            <BigTool $w={50}><BigIcon><Icon n="smart" s={32} v={30} /></BigIcon>智能布置<BigCaret /></BigTool>
            <Col w={87} ml={5} items={[['raw','原位标注',true],['span','重提梁跨',true],['elev','查改标高']]} />
            <Col w={45} items={[['apply','应用同名'],['refresh','刷新'],['brush','梁跨']]} />
          </GroupBody>
          <GroupLabel $left={174}>梁二次编辑</GroupLabel>
        </Group>
      </Ribbon>
      <PropBar>
        <SelectBox $w={97}>第2层<Caret /></SelectBox>
        <SelectBox $w={99}>&nbsp;梁<Caret /></SelectBox>
        <SelectBox $w={99}>&nbsp;梁<Caret /></SelectBox>
        <SelectBox $w={99}>&nbsp;KL1(1)<Caret /></SelectBox>
        <SelectBox $w={99}>&nbsp;分层1<Caret /></SelectBox>
        <CheckBox />
        <BarLabel $ml={-1}>点加长度</BarLabel>
        <BarLabel $off $ml={-1}>长度:</BarLabel>
        <TextField $w={78}>0</TextField>
        <BarLabel $off>反向长度:</BarLabel>
        <TextField $w={78}>0</TextField>
        <BarLabel>左偏心距离:</BarLabel>
        <TextField $w={78}>100</TextField>
        <SelectBox $w={55}>不偏移<Caret /></SelectBox>
        <BarLabel $off>X=</BarLabel>
        <Spin>0<SpinArrows><Up /><Down /></SpinArrows></Spin>
        <BarLabel $off>mm</BarLabel>
        <BarLabel $off>Y=</BarLabel>
        <Spin>0<SpinArrows><Up /><Down /></SpinArrows></Spin>
        <BarLabel $off>mm</BarLabel>
      </PropBar>
      <Main>
        <Sidebar>
          <SideBar>
            <SparkleCell><Icon n="sparkle" s={14} /></SparkleCell>
            <SideBtn><Icon n="list" s={20} v={20} /></SideBtn>
            <SideBtn><Icon n="form" s={20} v={20} /></SideBtn>
          </SideBar>
          <SideList>
            {sideRows.map((r) => (
              <SideRow key={r[1]} $sub={r[2]} $on={r[3]}>
                <Icon n={r[0]} />
                <SideText>{r[1]}</SideText>
              </SideRow>
            ))}
          </SideList>
        </Sidebar>
        <PanelColumn>
          <Panel $h={319}>
            <PanelStrip>×</PanelStrip>
            <PanelTabs><PanelTab $on>构件列表</PanelTab><PanelTab>图纸管理</PanelTab></PanelTabs>
            <PanelTools>
              <PanelTool $w={68}><Icon n="newI" s={15} /><PanelText>新建</PanelText><Caret /></PanelTool>
              <PanelTool $w={59}><Icon n="delI" s={15} /><PanelText>删除</PanelText></PanelTool>
              <PanelTool $w={57}><Icon n="copyI" s={15} /><PanelText>复制</PanelText></PanelTool>
              <PanelTool $w={84}><Icon n="floorI" s={15} /><PanelText>层间复制</PanelText></PanelTool>
              <MoreMark><MoreArrow /><MoreArrow /></MoreMark>
            </PanelTools>
            <SearchBox><SearchText>搜索构件...</SearchText><Icon n="search" s={14} /></SearchBox>
            <TreeArea>
              <Tree>
                <TreeRow $lv={0}><TreeArrow /><PlainLabel>梁</PlainLabel></TreeRow>
                <TreeRow $lv={1}><TreeArrow /><PlainLabel>楼层框架梁</PlainLabel></TreeRow>
                <TreeRow $lv={2}><TreeLabel $on>KL1(1)</TreeLabel></TreeRow>
                {['KL1a(1)','KL3(1)','KL5(1)','KL6(1A)'].map((t) => <TreeRow key={t} $lv={2}><TreeLabel>{t}</TreeLabel></TreeRow>)}
                <TreeRow $lv={1}><TreeArrow /><PlainLabel>非框架梁</PlainLabel></TreeRow>
                {['L1(1)','L2(1)','L3(2)'].map((t) => <TreeRow key={t} $lv={2}><TreeLabel>{t}</TreeLabel></TreeRow>)}
              </Tree>
              <TreeRail><TreeThumb /></TreeRail>
            </TreeArea>
          </Panel>
          <Panel>
            <PanelStrip>×</PanelStrip>
            <PanelTabs><PanelTab $on>属性列表</PanelTab><PanelTab>图层管理</PanelTab></PanelTabs>
            <TableArea>
              <Table>
                <TableHead>
                  <HeadCell $blank />
                  <HeadCell>属性名称</HeadCell>
                  <HeadCell>属性值</HeadCell>
                  <HeadClip>附加</HeadClip>
                </TableHead>
                {propRows.map((r, i) => (
                  <TableRow key={r[0]}>
                    <IndexCell>{i + 1}</IndexCell>
                    <NameCell $blue={r[2]}>{r[0]}</NameCell>
                    <ValueCell $off={i === 19 || i === 20}>{valueNode(r[1])}</ValueCell>
                    <AttachCell>{r[3] ? <AttachBox /> : null}</AttachCell>
                  </TableRow>
                ))}
              </Table>
              <TableRail><RailUp /><TableThumb /><RailDown /></TableRail>
            </TableArea>
          </Panel>
        </PanelColumn>
        <SplitGrip><Grip /></SplitGrip>
        <Canvas><Drawing /></Canvas>
      </Main>
      <Overlay viewBox="0 0 1302 983">
        <rect x="184.500" y="747.500" width="251" height="22" fill="none" stroke="#e8484a" />
        <path d="M381 760L398 757L400 762L516 795L398 768L395 772z" fill="#f0484a" />
        <text x="516" y="806" fill="#e8403c" fontSize="16" fontFamily='"Noto Sans CJK SC", sans-serif'>在此处输入侧面钢筋</text>
      </Overlay>
    </Page>
  );
}
